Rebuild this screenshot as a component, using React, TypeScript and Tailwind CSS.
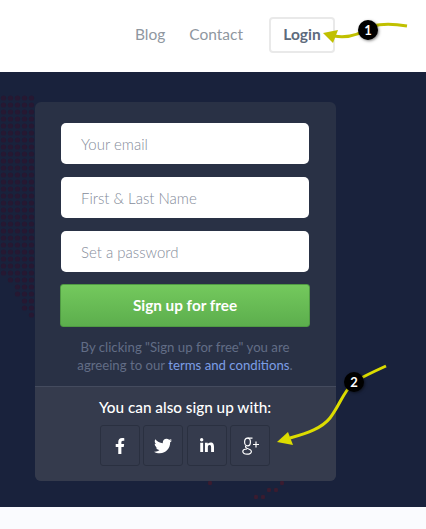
import React from "react";
import { FaFacebookF, FaTwitter, FaLinkedinIn } from "react-icons/fa";

const font = "font-['Lato','Noto_Sans',sans-serif]";

const fields = ["Your email", "First & Last Name", "Set a password"];

const socialBtn =
  "flex h-[41px] w-[40px] items-center justify-center rounded-[3px] border border-[#2a3040] text-white";

// Map dots left of the card: the left edge tapers off towards the bottom
const mapDots: { x: number; y: number }[] = [];
for (let row = 0; row < 32; row++) {
  const y = 26 + row * 7;
  const minX = y < 195 ? 0 : ((y - 195) / 48) * 28;
  for (let x = 3.5; x < 35; x += 7) {
    if (x >= minX) mapDots.push({ x, y });
  }
}

// Numbered callout pinned on top of the screenshot
const Badge = ({ n, className }: { n: number; className: string }) => (
  <div
    className={`absolute flex h-[20px] w-[20px] items-center justify-center rounded-full bg-black text-[13px] font-bold leading-none text-white shadow-[1px_1px_3px_rgba(0,0,0,0.5)] ${className}`}
  >
    {n}
  </div>
);

// Old-style thin Google+ mark
const GooglePlus = () => (
  <svg width="17" height="18" viewBox="0 0 17 18" fill="none" stroke="white" strokeWidth="1.2">
    <ellipse cx="5.5" cy="5" rx="2.9" ry="3.9" />
    <path d="M5.5 1.1 H10.5" />
    <path d="M4.2 8.6 C3 9.6 3.4 10.6 5 11.2 C8 12.2 9.6 13 9.4 14.6 C9.2 16.4 7 17.2 5 17.2 C2.6 17.2 0.8 16.2 0.8 14.6 C0.8 13 2.8 12 5 12" />
    <path d="M11 7.5 H17 M14 4.5 V10.5" />
  </svg>
);

export default function App() {
  return (
    <div className={`relative flex h-[529px] w-[426px] flex-col overflow-hidden bg-[#fafbfe] ${font}`}>
      {/* Top nav */}
      <header className="flex h-[72px] items-center justify-end bg-white pb-[3px] pr-[91px] text-[15.5px]">
        <a className="mr-[24px] text-[#8f979f]">Blog</a>
        <a className="mr-[26px] text-[#8f979f]">Contact</a>
        <button className="flex h-[36px] w-[66px] items-center justify-center rounded-[4px] border-2 border-[#e9e9e9] font-bold text-[#5d6a7c]">
          Login
        </button>
      </header>

      {/* Hero */}
      <main className="relative h-[435px] bg-[#19223c] pl-[35px] pt-[30px]">
        {/* Dotted world map behind the card */}
        <svg className="absolute left-0 top-0" width="426" height="435">
          {mapDots.map((d) => (
            <circle key={`${d.x}-${d.y}`} cx={d.x} cy={d.y} r="2.6" fill="#261832" />
          ))}
          <circle cx="210" cy="411" r="2.2" fill="#3a1c30" />
          <circle cx="282" cy="411" r="2.2" fill="#3a1c30" />
          <circle cx="269" cy="418" r="2.2" fill="#3a1c30" />
          <circle cx="276" cy="418" r="2.2" fill="#3a1c30" />
          <circle cx="256" cy="425" r="2.2" fill="#3a1c30" />
          <circle cx="263" cy="425" r="2.2" fill="#3a1c30" />
        </svg>

        {/* Sign up card */}
        <section className="relative flex h-[379px] w-[301px] flex-col overflow-hidden rounded-[6px] bg-[#293145]">
          <form className="flex flex-1 flex-col items-center pr-[1px] pt-[21px]">
            {fields.map((label) => (
              <div
                key={label}
                className="mb-[13px] flex h-[41px] w-[248px] items-center rounded-[5px] bg-white pl-[20px] pt-[1px] text-[15px] font-light text-[#858c9a]"
              >
                {label}
              </div>
            ))}
            <button
              type="button"
              className="-mt-[1px] h-[43px] w-[250px] rounded-[3px] border border-[#4f9a43] bg-gradient-to-b from-[#74c95d] to-[#5cae4d] text-[15.3px] font-bold text-white"
            >
              Sign up for free
            </button>
            <p className="mt-[11px] text-center text-[13.2px] leading-[18px] text-[#626d86]">
              By clicking "Sign up for free" you are
              <br />
              agreeing to our <span className="text-[#7c9ee6]">terms and conditions</span>.
            </p>
          </form>
          <div className="flex h-[95px] flex-col items-center border-t border-[#444b5e] bg-[#353b4d] pr-[1px] pt-[11px]">
            <p className="text-[15.3px] font-medium leading-[19px] text-white">You can also sign up with:</p>
            <div className="mt-[8px] flex gap-[3px]">
              <a className={`${socialBtn} text-[16px]`}>
                <FaFacebookF />
              </a>
              <a className={`${socialBtn} text-[18px]`}>
                <FaTwitter />
              </a>
              <a className={`${socialBtn} ml-[1px] text-[16px]`}>
                <FaLinkedinIn />
              </a>
              <a className={socialBtn}>
                <GooglePlus />
              </a>
            </div>
          </div>
        </section>
      </main>

      {/* Yellow annotation arrows */}
      <svg className="pointer-events-none absolute left-0 top-0" width="426" height="529">
        <path d="M407 26 C395 24 385 23 372 26 C364 32 352 39 334 36" fill="none" stroke="#c0c000" strokeWidth="3" />
        <polygon points="323,33 338,30 333,43" fill="#c0c000" />
        <path d="M386 366 C375 371 364 376 354 382 C343 392 340 405 330 418 C322 428 308 433 290 438" fill="none" stroke="#dcdc00" strokeWidth="3" />
        <polygon points="277,442 288,432 293,445" fill="#dcdc00" />
      </svg>
      <Badge n={1} className="left-[358px] top-[20px]" />
      <Badge n={2} className="left-[344px] top-[372px]" />
    </div>
  );
}
